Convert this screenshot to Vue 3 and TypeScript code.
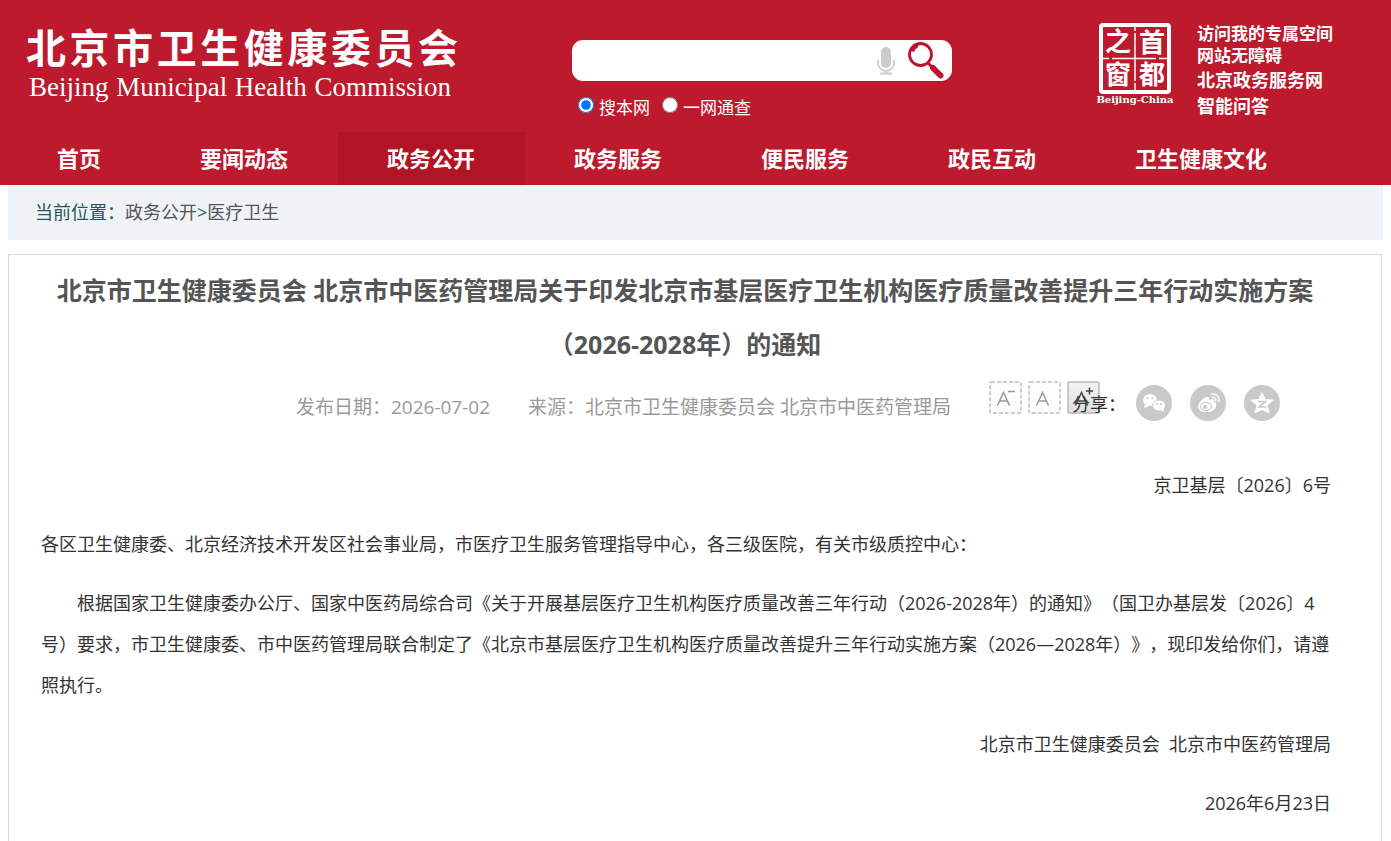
<script setup lang="ts">
interface NavItem { label: string; active?: boolean }

const navItems: NavItem[] = [
  { label: '首页' },
  { label: '要闻动态' },
  { label: '政务公开', active: true },
  { label: '政务服务' },
  { label: '便民服务' },
  { label: '政民互动' },
  { label: '卫生健康文化' },
]
</script>

<template>
  <div class="page">
    <header class="header">
      <div class="top">
        <a class="brand" href="#">
          <span class="brand-cn">北京市卫生健康委员会</span>
          <span class="brand-en">Beijing Municipal Health Commission</span>
        </a>

        <form class="search" @submit.prevent>
          <div class="search-box">
            <input class="search-input" type="text" aria-label="搜索" />
            <button class="icon-btn mic" type="button" aria-label="语音">
              <svg width="18" height="28" viewBox="0 0 18 28">
                <rect x="4" y="0" width="10" height="21" rx="5" fill="#ccc" />
                <path d="M1 13v3a8 8 0 0 0 16 0v-3M9 24v2M3 26.5h12" fill="none" stroke="#ccc" stroke-width="1.8" />
              </svg>
            </button>
            <button class="icon-btn" type="submit" aria-label="搜索">
              <svg width="36" height="37" viewBox="0 0 36 37">
                <circle cx="12.5" cy="12.5" r="11" fill="none" stroke="#bd1230" stroke-width="2.8" />
                <path d="M3 9Q5 3 11 2Q10 4 9.500 6Q7 6.500 6 10Z" fill="#bd1230" />
                <path d="M20 21l4 4" stroke="#bd1230" stroke-width="3" />
                <path d="M25 26l7.500 7.500" stroke="#bd1230" stroke-width="6" stroke-linecap="round" />
              </svg>
            </button>
          </div>
          <div class="scopes">
            <label class="scope"><input type="radio" name="scope" checked />搜本网</label>
            <label class="scope"><input type="radio" name="scope" />一网通查</label>
          </div>
        </form>

        <a class="seal" href="#" aria-label="首都之窗">
          <svg width="80" height="84" viewBox="0 0 80 84">
            <rect x="6" y="3" width="68" height="67" rx="2" fill="none" stroke="#fff" stroke-width="4" />
            <path d="M40 5v4M40 11v48M40 61v8M8 36.500h6M17 36.500h44M64 36.500h8" stroke="#fff" stroke-width="1.500" />
            <g class="seal-cn" fill="#fff" text-anchor="middle">
              <text x="23" y="29">之</text>
              <text x="57" y="30">首</text>
              <text x="23" y="62">窗</text>
              <text x="57" y="62">都</text>
            </g>
            <text class="seal-en" x="40" y="81" fill="#fff" text-anchor="middle">Beijing-China</text>
          </svg>
        </a>

        <div class="links">
          <a class="small" href="#">访问我的专属空间</a>
          <a class="small" href="#">网站无障碍</a>
          <a class="large" href="#">北京政务服务网</a>
          <a class="large" href="#">智能问答</a>
        </div>
      </div>

      <nav class="nav">
        <a v-for="item in navItems" :key="item.label" href="#" :class="{ active: item.active }">{{ item.label }}</a>
      </nav>
    </header>

    <div class="crumbs">当前位置：<a href="#">政务公开</a>&gt;<a href="#">医疗卫生</a></div>

    <article class="article">
      <h1>北京市卫生健康委员会 北京市中医药管理局关于印发北京市基层医疗卫生机构医疗质量改善提升三年行动实施方案（2026-2028年）的通知</h1>

      <div class="meta">
        <span class="date">发布日期：2026-07-02</span>
        <span class="source">来源：北京市卫生健康委员会 北京市中医药管理局</span>
        <div class="sizes">
          <button type="button" aria-label="缩小字号">
            <svg width="33" height="33" viewBox="0 0 33 33">
              <rect class="dash" x="1" y="1" width="31" height="31" rx="1" />
              <path class="letter" d="M8.500 24.500L14.500 11.500L20.500 24.500M10.500 20h8" />
              <path class="letter" d="M19 10.500h7" />
            </svg>
          </button>
          <button type="button" aria-label="默认字号">
            <svg width="33" height="33" viewBox="0 0 33 33">
              <rect class="dash" x="1" y="1" width="31" height="31" rx="1" />
              <path class="letter" d="M8.500 24.500L14.500 11.500L20.500 24.500M10.500 20h8" />
            </svg>
          </button>
          <button type="button" aria-label="放大字号">
            <svg width="33" height="33" viewBox="0 0 33 33">
              <defs>
                <linearGradient id="plus-bg" x1="0" y1="0" x2="0" y2="1">
                  <stop offset="0" stop-color="#f4f4f4" />
                  <stop offset="1" stop-color="#dedede" />
                </linearGradient>
              </defs>
              <rect x="1" y="1" width="31" height="31" rx="1" fill="url(#plus-bg)" stroke="#bbb" stroke-width="1.500" />
              <path class="letter dark" d="M8.500 24.500L14.500 11.500L20.500 24.500M10.500 20h8" />
              <path class="letter dark" d="M19 10h7M22.500 6.500v7" />
            </svg>
          </button>
        </div>
        <div class="share">
          <span>分享：</span>
          <a href="#" aria-label="微信">
            <svg width="36" height="36" viewBox="0 0 36 36">
              <circle cx="18" cy="18" r="18" fill="#c9c9c9" />
              <ellipse cx="14" cy="15" rx="7" ry="6" fill="#fff" />
              <path d="M9 19l-1 4 5-2z" fill="#fff" />
              <ellipse cx="23" cy="20.500" rx="6.500" ry="5.500" fill="#fff" stroke="#c9c9c9" />
              <path d="M25 25l3 2-.5-4z" fill="#fff" />
              <g fill="#c9c9c9"><circle cx="11.500" cy="13" r="1" /><circle cx="16.500" cy="13" r="1" /><circle cx="21" cy="19" r="1" /><circle cx="25" cy="19" r="1" /></g>
            </svg>
          </a>
          <a href="#" aria-label="微博">
            <svg width="36" height="36" viewBox="0 0 36 36">
              <circle cx="18" cy="18" r="18" fill="#c9c9c9" />
              <path d="M8 22c0-4 6-10 9.500-10 2 0 2 2 1.500 3 3-1.500 6-1 5 2 5 1.500 2 10-7 10-5 0-9-2-9-5z" fill="#fff" />
              <ellipse cx="16" cy="21.500" rx="6" ry="4.500" fill="#c9c9c9" />
              <ellipse cx="16" cy="21.500" rx="5" ry="3.500" fill="#fff" />
              <circle cx="15" cy="22" r="2" fill="#c9c9c9" />
              <path d="M21.500 9c5-1 8.500 3 7 8M22 12.500c3-.5 4.500 1.500 3.500 4" fill="none" stroke="#f4f4f4" stroke-width="1.700" stroke-linecap="round" />
            </svg>
          </a>
          <a href="#" aria-label="QQ空间">
            <svg width="36" height="36" viewBox="0 0 36 36">
              <circle cx="18" cy="18" r="18" fill="#c9c9c9" />
              <path d="M18 6.500l3.500 7.500 8.500.7-6.500 5.600 2.200 8.200L18 25l-7.700 3.500 2.200-8.200L6 14.700l8.500-.7z" fill="#fff" />
              <path d="M14 16.500h7.500l-6.500 5.500h7.500" fill="none" stroke="#c9c9c9" stroke-width="1.700" />
            </svg>
          </a>
        </div>
      </div>

      <div class="content">
        <p class="right">京卫基层〔2026〕6号</p>
        <p>各区卫生健康委、北京经济技术开发区社会事业局，市医疗卫生服务管理指导中心，各三级医院，有关市级质控中心：</p>
        <p class="indent">根据国家卫生健康委办公厅、国家中医药局综合司《关于开展基层医疗卫生机构医疗质量改善三年行动（2026-2028年）的通知》（国卫办基层发〔2026〕4号）要求，市卫生健康委、市中医药管理局联合制定了《北京市基层医疗卫生机构医疗质量改善提升三年行动实施方案（2026—2028年）》，现印发给你们，请遵照执行。</p>
        <p class="right">北京市卫生健康委员会&nbsp; 北京市中医药管理局</p>
        <p class="right">2026年6月23日</p>
      </div>
    </article>
  </div>
</template>

<style>
html { overflow: hidden; }
body { margin: 0; background: #fff; }
</style>

<style scoped>
.page {
  font-family: "Open Sans", "Noto Sans CJK SC", sans-serif;
  font-size: 18px;
  color: #333;
  text-spacing-trim: space-all;
}
a { color: inherit; text-decoration: none; }
button { padding: 0; border: 0; background: none; cursor: pointer; }
svg { display: block; }

.header { background: #bd1a2d; color: #fff; }
.top { display: flex; height: 132px; box-sizing: border-box; padding-left: 26px; }
.brand { width: 432px; padding-top: 22px; }
.brand span { display: block; text-align-last: justify; white-space: nowrap; }
.brand-cn { font-size: 40px; line-height: 52px; font-weight: 700; }
.brand-en {
  font-family: "Liberation Serif", serif;
  font-size: 27px;
  line-height: 26px;
  padding: 0 7px 0 3px;
}
.search { width: 380px; margin-left: 114px; padding-top: 40px; }
.search-box {
  display: flex;
  align-items: center;
  height: 41px;
  padding-right: 8px;
  gap: 13px;
  border-radius: 11px;
  box-sizing: border-box;
  background: #fff;
}
.search-input { flex: 1; min-width: 0; height: 39px; padding: 0 12px; border: 0; outline: 0; background: none; font-size: 18px; }
.scopes { display: flex; gap: 12px; padding: 15px 0 0 6px; font-size: 17px; line-height: 24px; }
.scope { display: flex; align-items: flex-start; gap: 5px; }
.scope input { width: 16px; height: 16px; margin: 1px 0 0; }
.seal { margin-left: auto; padding-top: 22px; }
.seal-cn { font-family: "Noto Sans CJK SC", sans-serif; font-size: 26px; font-weight: 700; }
.seal-en { font-family: "DejaVu Serif", serif; font-size: 10px; font-weight: 700; }
.links { display: flex; flex-direction: column; box-sizing: border-box; width: 216px; padding: 23px 0 0 22px; font-weight: 700; }
.small { font-size: 17px; line-height: 22px; }
.large { font-size: 18px; line-height: 26px; }

.nav { display: flex; padding-left: 8px; font-size: 22px; font-weight: 700; line-height: 53px; }
.nav a { padding: 0 50px 0 49px; white-space: nowrap; }
.nav .active { background: #b01425; }

.crumbs { margin: 0 8px; padding: 0 27px; background: #eff3f6; line-height: 55px; color: #245560; }
.crumbs a { color: #555; }

.article { margin: 14px 9px 0 8px; border: 1px solid #d8dadb; }
h1 { margin: 0; padding: 8px 44px 0 24px; font-size: 25px; line-height: 54px; font-weight: 700; text-align: center; color: #555; }

.meta { display: flex; justify-content: flex-end; padding: 10px 101px 0 0; white-space: nowrap; }
.date, .source { font-size: 19px; line-height: 52px; color: #999; }
.source { margin: 0 38px; }
.sizes { display: flex; gap: 6px; }
.sizes button { height: 33px; }
.dash { fill: #fcfcfc; stroke: #bfbfb8; stroke-width: 1.5; stroke-dasharray: 4 2; }
.letter { fill: none; stroke: #999; stroke-width: 1.5; }
.dark { stroke: #444; }
.share { display: flex; align-items: center; align-self: flex-start; gap: 18px; height: 44px; margin-left: -28px; z-index: 1; }
.share span { margin-right: -8px; }

.content { padding: 32px 50px 36px 32px; line-height: 41px; }
.content p { margin: 0 0 18px; }
.content .indent { text-indent: 36px; margin-right: -10px; }
.content .right { text-align: right; }
</style>
